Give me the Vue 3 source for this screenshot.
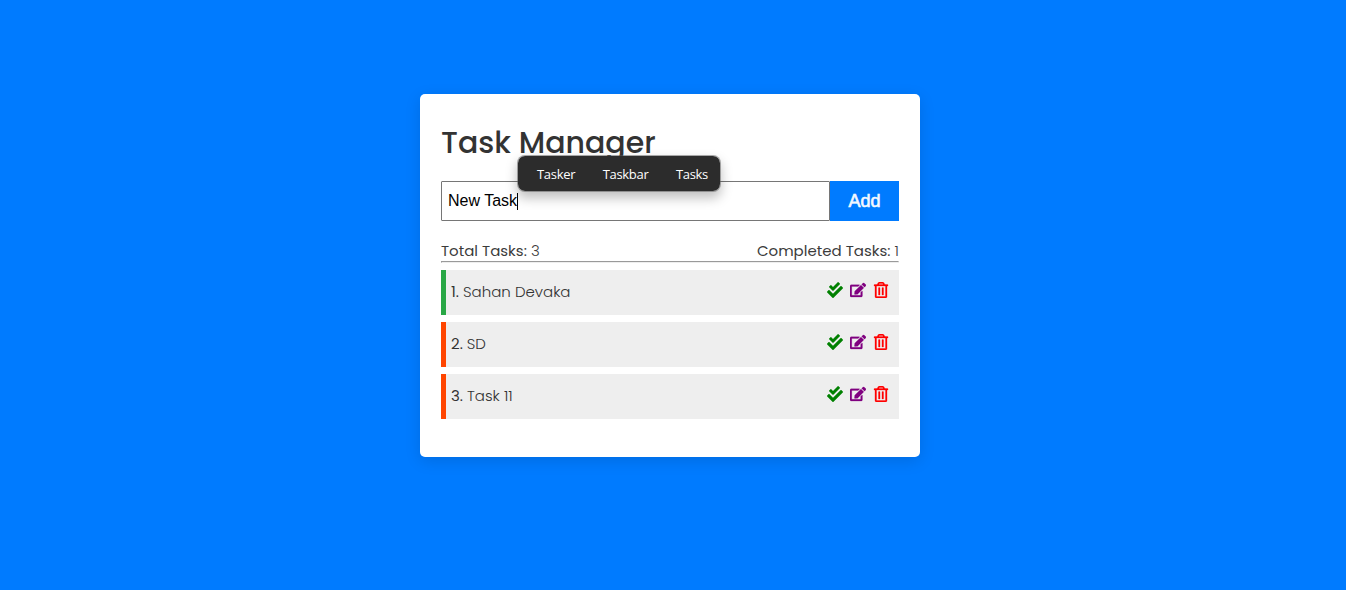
<script setup>
import { ref } from 'vue'

const tasks = ref([
  { name: 'Sahan Devaka', done: true },
  { name: 'SD', done: false },
  { name: 'Task 11', done: false }
])
const suggestions = ['Tasker', 'Taskbar', 'Tasks']
</script>

<template>
  <main class="app">
    <section class="card">
      <h2 class="title">Task Manager</h2>
      <form class="task-form" @submit.prevent>
        <div class="field"><span class="typed">New Task</span><span class="caret"></span></div>
        <button class="add" type="submit">Add</button>
        <div class="suggestions">
          <span v-for="s in suggestions" :key="s">{{ s }}</span>
        </div>
      </form>
      <div class="stats">
        <p><b>Total Tasks:</b> <span>3</span></p>
        <p><b>Completed Tasks:</b> <span>1</span></p>
      </div>
      <hr class="rule" />
      <div v-for="(task, i) in tasks" :key="task.name" class="task" :class="{ done: task.done }">
        <p class="label"><b>{{ i + 1 }}.</b><span>{{ task.name }}</span></p>
        <div class="icons">
          <svg class="check" viewBox="0 0 512 512"><path d="M505 174.8l-39.6-39.6c-9.4-9.4-24.6-9.4-33.9 0L192 374.7 80.6 263.2c-9.4-9.4-24.6-9.4-33.9 0L7 302.9c-9.4 9.4-9.4 24.6 0 34L175 505c9.4 9.4 24.6 9.4 33.9 0l296-296.2c9.4-9.5 9.4-24.7.1-34zm-324.3 106c6.2 6.3 16.4 6.3 22.6 0l208-208.2c6.2-6.3 6.2-16.4 0-22.6L366.1 4.7c-6.2-6.3-16.4-6.3-22.6 0L192 156.2l-55.4-55.5c-6.2-6.3-16.4-6.3-22.6 0L68.7 146c-6.2 6.3-6.2 16.4 0 22.6l112 112.2z" /></svg>
          <svg class="edit" viewBox="0 0 576 512"><path d="M402.6 83.2l90.2 90.2c3.8 3.8 3.8 10 0 13.8L274.4 405.6l-92.8 10.3c-12.4 1.4-22.9-9.1-21.5-21.5l10.3-92.8L388.8 83.2c3.8-3.8 10-3.8 13.8 0zm162-22.9l-48.8-48.8c-15.2-15.2-39.9-15.2-55.2 0l-35.4 35.4c-3.8 3.8-3.8 10 0 13.8l90.2 90.2c3.8 3.8 10 3.8 13.8 0l35.4-35.4c15.2-15.2 15.2-39.9 0-55.2zM384 346.2V448H64V128h229.8c3.2 0 6.2-1.3 8.5-3.5l40-40c7.6-7.6 2.1-20.5-8.5-20.5H48C21.5 64 0 85.5 0 112v352c0 26.5 21.5 48 48 48h352c26.5 0 48-21.5 48-48V306.2c0-10.7-12.9-16-20.5-8.5l-40 40c-2.2 2.3-3.5 5.3-3.5 8.5z" /></svg>
          <svg class="trash" viewBox="0 0 448 512"><path d="M268 416h24a12 12 0 0 0 12-12V188a12 12 0 0 0-12-12h-24a12 12 0 0 0-12 12v216a12 12 0 0 0 12 12zM432 80h-82.41l-34-56.7A48 48 0 0 0 274.41 0H173.59a48 48 0 0 0-41.16 23.3L98.41 80H16A16 16 0 0 0 0 96v16a16 16 0 0 0 16 16h16v336a48 48 0 0 0 48 48h288a48 48 0 0 0 48-48V128h16a16 16 0 0 0 16-16V96a16 16 0 0 0-16-16zM171.84 50.91A6 6 0 0 1 177 48h94a6 6 0 0 1 5.15 2.91L293.61 80H154.39zM368 464H80V128h288zm-212-48h24a12 12 0 0 0 12-12V188a12 12 0 0 0-12-12h-24a12 12 0 0 0-12 12v216a12 12 0 0 0 12 12z" /></svg>
        </div>
      </div>
    </section>
  </main>
</template>

<style>
html, body { margin: 0; background: #007bff; }
</style>

<style scoped>
* { box-sizing: border-box; }
.app {
  height: 590px;
  padding: 94px 0 0 420px;
  overflow: hidden;
  background: #007bff;
  color: #333;
  font-family: Poppins, Inter, sans-serif;
  font-size: 15px;
  font-weight: 300;
}
.card {
  width: 500px;
  height: 363px;
  padding: 26px 21px 0;
  background: #fff;
  border-radius: 5px;
  box-shadow: 0 4px 16px rgba(0, 0, 0, 0.12);
}
.title {
  height: 45px;
  margin: 0 0 16px;
  font-size: 30px;
  font-weight: 500;
  line-height: 45px;
  white-space: nowrap;
}
.task-form { position: relative; display: flex; height: 40px; }
.field {
  display: flex;
  align-items: center;
  width: 389px;
  padding: 0 6px;
  border: 1px solid #767676;
  border-radius: 1px;
  color: #000;
  font: 400 16px "Liberation Sans", Arial, sans-serif;
}
.typed { line-height: 18px; }
.caret { width: 1px; height: 17px; background: #000; }
.add {
  width: 69px;
  padding: 1px 0 0;
  border: 0;
  background: #007bff;
  color: #f4f8ff;
  font: 400 18px "Liberation Sans", Arial, sans-serif;
  -webkit-text-stroke: 0.6px #f4f8ff;
}
.suggestions {
  position: absolute;
  top: -26px;
  left: 76px;
  display: flex;
  justify-content: space-between;
  width: 204px;
  height: 37px;
  padding: 0 12px 0 19px;
  border: 1px solid rgba(90, 90, 90, 0.5);
  border-radius: 8px;
  background: #2c2c2c;
  background-clip: padding-box;
  box-shadow: 0 6px 12px rgba(0, 0, 0, 0.25);
  color: #fff;
  font: 400 13px/36px "Open Sans", "Noto Sans", sans-serif;
  letter-spacing: -0.3px;
}
.stats { display: flex; justify-content: space-between; height: 40px; padding-top: 18px; color: #3c3c3c; }
.stats p { margin: 0; line-height: 24px; white-space: nowrap; }
b { font-weight: 400; }
.rule {
  height: 2px;
  margin: 0 0 7px;
  border: 1px solid;
  border-color: #9a9a9a #eee #eee #9a9a9a;
}
.task {
  display: flex;
  justify-content: space-between;
  height: 45px;
  margin-bottom: 7px;
  padding: 0 10px 0 5px;
  border-left: 5px solid orangered;
  background: #eee;
}
.task.done { border-left-color: #28a745; }
.label { display: flex; gap: 4px; margin: 0; line-height: 44px; }
.icons { display: flex; gap: 7px; padding-top: 12px; }
.icons svg { width: 16px; height: 16px; fill: currentColor; }
.check { color: green; }
.edit { color: purple; stroke: currentColor; stroke-width: 8; }
.trash { color: red; stroke: currentColor; stroke-width: 10; }
</style>
